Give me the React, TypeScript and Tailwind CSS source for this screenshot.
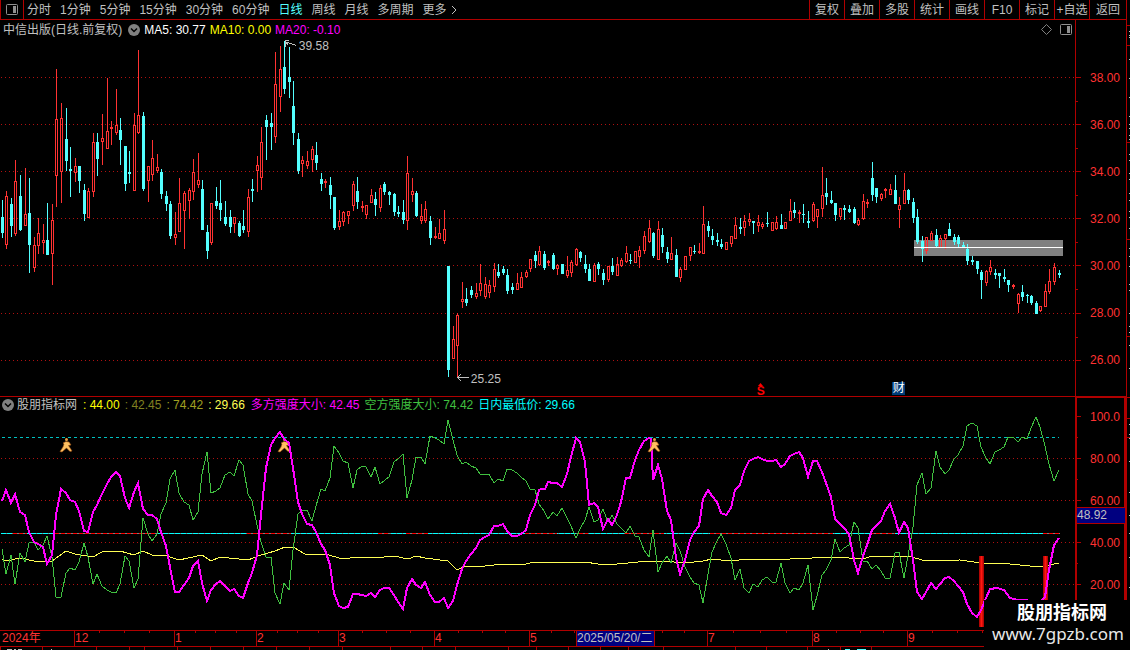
import React from 'react';

// x, high, body top, body bottom, low, direction (u = up, d = down)
const candleData = `
2 200 217 233 238 d;6 191 196 245 249 r;11 198 204 226 237 d;15 160 181 234 236 u;20 175 196 230 231 d;25 168 214 226 226 u;
29 178 213 245 273 d;34 237 245 268 272 u;38 218 233 246 254 u;43 224 240 243 254 u;47 203 240 255 255 d;52 204 220 254 285 u;
56 69 119 176 207 u;61 103 118 172 203 u;66 108 139 161 171 d;70 147 169 171 197 d;75 158 166 173 182 u;79 166 166 181 193 d;
84 184 190 214 221 d;88 188 191 218 218 u;93 133 142 192 197 u;97 133 142 159 176 d;102 114 138 142 165 u;107 78 131 149 149 u;
111 121 127 129 145 u;116 89 125 133 135 u;120 118 130 140 165 d;125 146 146 184 191 d;129 151 172 174 183 d;134 113 125 191 191 u;
138 50 115 133 134 u;143 112 116 189 191 d;148 166 166 181 202 u;152 140 158 175 181 u;157 154 167 171 173 u;161 169 172 194 199 d;
166 191 196 204 211 d;170 201 204 236 239 d;175 212 234 238 245 u;179 178 203 232 232 u;184 191 193 211 249 u;189 188 190 201 219 u;
193 159 172 192 200 u;198 153 180 185 188 u;202 180 189 230 230 d;207 225 232 251 259 d;211 203 203 243 245 u;216 187 201 206 209 d;
220 180 203 210 221 d;225 201 217 224 226 d;230 210 217 227 233 d;234 217 217 224 233 u;239 221 223 236 237 d;243 210 226 230 233 d;
248 189 197 232 237 u;252 179 189 191 202 d;257 156 165 171 192 u;261 127 142 178 190 u;266 115 120 127 160 d;271 113 123 127 150 d;
275 52 84 137 143 u;280 46 69 97 112 u;284 41 67 89 94 d;289 47 77 82 98 d;293 81 106 133 145 d;298 133 139 171 174 d;
302 156 160 164 177 u;307 151 161 166 169 u;312 146 149 160 172 u;316 142 155 163 170 d;321 173 179 184 191 d;325 179 181 183 188 u;
330 177 185 195 209 d;334 197 197 228 230 d;339 210 221 227 230 u;343 211 212 222 226 u;348 211 211 216 224 u;353 181 184 206 211 u;
357 177 191 202 209 d;362 201 206 208 212 u;366 205 205 215 219 u;371 189 195 203 203 u;375 192 199 205 216 d;380 185 188 208 212 u;
384 182 184 192 195 d;389 191 192 195 205 d;394 193 194 212 216 d;398 206 212 214 217 d;403 200 212 220 224 d;407 156 173 221 230 u;
412 178 191 195 202 u;416 191 193 216 217 d;421 204 216 221 224 u;425 201 209 221 223 u;430 216 221 238 245 d;435 227 236 238 239 u;
439 219 233 239 239 u;444 210 229 241 244 u;448 266 266 370 377 d;453 326 339 359 359 u;457 313 315 346 377 u;462 282 299 302 308 u;
466 288 299 303 306 d;471 286 290 295 298 d;476 283 293 297 299 u;480 264 283 291 296 u;485 277 284 297 299 u;489 280 285 293 298 u;
494 263 269 287 292 u;498 264 272 276 278 d;503 266 269 273 275 d;507 269 275 291 294 d;512 283 287 290 294 d;517 273 283 290 290 u;
521 272 277 288 288 u;526 270 272 277 278 u;530 259 259 269 272 u;535 251 255 261 268 d;539 246 251 265 266 u;544 251 254 268 270 d;
548 260 261 263 266 u;553 253 255 269 270 d;557 264 265 269 275 u;562 264 264 274 274 d;567 256 270 276 278 u;571 260 262 273 277 u;
576 248 249 265 266 u;580 251 252 258 262 d;585 255 264 269 273 d;589 264 269 281 281 d;594 263 265 282 282 u;598 262 264 269 275 d;
603 269 273 280 285 d;608 266 266 280 282 u;612 258 266 272 275 d;617 257 264 276 276 u;621 258 260 266 267 u;626 246 253 262 263 u;
630 254 260 261 264 d;635 251 251 263 263 u;639 246 250 257 268 u;644 231 236 251 254 u;649 220 228 242 243 u;653 232 233 256 258 d;
658 221 229 260 260 u;662 228 235 247 253 d;667 247 252 259 263 d;671 237 253 260 260 u;676 249 255 277 277 d;680 267 269 278 282 u;
685 256 256 270 270 u;690 247 247 256 261 u;694 245 251 252 254 d;699 243 251 253 254 u;703 206 224 254 254 u;708 221 226 231 237 d;
712 229 236 240 245 d;717 233 240 242 246 d;721 239 244 247 249 d;726 242 242 250 250 u;731 236 236 244 247 u;735 217 225 239 239 u;
740 218 227 229 234 d;744 215 221 228 236 u;749 213 219 222 226 u;753 221 221 223 234 d;758 215 222 226 232 u;762 222 224 227 229 u;
767 212 223 224 227 d;772 222 222 231 231 u;776 216 222 229 230 u;781 214 225 229 229 d;785 222 222 229 229 u;790 199 211 221 221 u;
794 202 210 213 218 d;799 210 212 214 223 u;803 204 214 215 223 d;808 211 221 223 228 d;813 202 204 221 222 u;817 209 209 217 228 u;
822 167 195 209 217 u;826 178 193 197 205 d;831 191 200 203 204 d;835 203 203 215 221 d;840 208 208 217 220 u;844 205 208 210 220 d;
849 205 209 212 213 d;854 207 209 223 224 d;858 218 220 225 226 u;863 194 201 219 220 u;867 199 202 204 208 u;872 162 178 195 201 d;
876 188 188 197 203 d;881 193 194 199 201 u;885 188 189 191 198 u;890 184 189 195 195 u;895 175 190 204 204 d;899 197 205 210 228 u;
904 173 190 204 204 u;908 189 190 200 204 d;913 198 202 218 223 d;917 209 217 242 244 d;922 236 241 249 262 d;926 237 237 251 254 u;
931 231 233 241 241 u;936 229 235 246 248 d;940 235 238 248 248 u;945 234 234 239 249 u;949 223 229 236 236 d;954 234 237 242 245 d;
958 235 237 244 247 d;963 242 245 248 248 d;967 244 249 261 265 d;972 256 260 262 265 d;977 261 261 269 274 d;981 270 272 280 299 d;
986 270 271 283 286 u;990 260 267 272 275 u;995 269 273 275 279 d;999 273 273 276 288 d;1004 269 277 279 282 d;1008 280 280 285 292 d;
1013 284 285 287 289 u;1018 293 294 304 313 u;1022 285 292 297 301 d;1027 294 295 296 303 d;1031 295 296 303 305 d;1036 301 303 314 314 d;
1040 306 306 311 312 u;1045 284 291 307 307 u;1049 269 281 292 294 u;1054 263 267 282 285 u;1059 270 273 275 278 d`;

const candles = candleData
  .trim()
  .split(';')
  .map((row) => {
    const [x, high, top, bottom, low, dir] = row.trim().split(' ');
    return { x: +x, high: +high, top: +top, bottom: +bottom, low: +low, down: dir === 'd' };
  });

const bullLine =
  '2,501 6,490 11,503 15,494 20,512 25,515 29,532 34,542 38,544 43,547 47,564 52,555 56,515 61,489 66,493 70,500 75,502 79,511 84,531 88,532 93,512 97,505 102,494 107,484 111,477 116,472 120,476 125,498 129,508 134,492 138,483 143,509 148,515 152,515 157,519 161,532 166,546 170,567 175,592 179,592 184,585 189,578 193,566 198,561 202,583 207,601 211,590 216,584 220,581 225,586 230,591 234,589 239,596 243,598 248,583 252,573 257,555 261,515 266,468 271,445 275,438 280,432 284,439 289,443 293,468 298,502 302,514 307,524 312,525 316,532 321,544 325,550 330,565 334,593 339,606 343,608 348,607 353,594 357,594 362,595 366,596 371,593 375,597 380,590 384,588 389,588 394,595 398,602 403,609 407,588 412,579 416,585 421,588 425,582 430,595 435,602 439,602 444,598 448,608 453,601 457,585 462,569 466,561 471,554 476,548 480,540 485,537 489,535 494,526 498,526 503,524 507,531 512,536 517,536 521,534 526,530 530,515 535,505 539,490 541,489 545,489 548,482 553,483 557,483 562,487 567,474 571,457 576,438 580,442 585,462 589,505 594,503 598,507 603,529 608,519 612,525 617,515 621,502 626,478 630,478 635,460 639,450 644,441 649,438 651,439 653,480 658,465 662,479 667,511 671,520 676,558 680,574 685,560 690,540 694,532 699,526 703,499 708,490 712,496 717,502 721,513 726,515 731,508 735,490 740,485 744,471 749,461 753,459 758,457 762,459 767,461 772,461 776,460 781,467 785,464 790,456 794,454 799,452 803,458 808,477 813,461 817,461 822,472 826,483 831,497 835,519 840,524 844,528 849,534 854,560 858,573 863,556 867,545 872,530 876,526 881,521 885,511 890,504 895,518 899,533 904,522 908,528 913,560 917,592 922,599 926,592 931,583 936,589 940,584 945,578 949,577 954,581 958,586 963,592 967,604 972,613 977,617 981,610 986,598 990,589 997,588 1004,590 1010,598 1018,600 1027,600 1036,606 1045,597 1049,570 1054,545 1059,538';

const bearLine =
  '2,549 6,574 11,555 15,584 20,553 25,562 29,543 34,542 38,550 43,545 47,536 52,557 56,597 61,597 66,573 70,568 75,570 79,562 84,543 88,557 93,584 97,574 102,586 107,590 111,592 116,593 120,584 125,556 129,561 134,588 138,579 143,518 148,534 152,541 157,534 161,514 166,503 170,479 175,470 179,493 184,502 189,505 193,520 198,512 202,474 207,452 211,493 216,491 220,488 225,475 230,472 234,476 239,460 243,465 248,494 252,501 257,525 261,542 266,557 271,557 275,593 280,604 284,583 289,590 293,550 298,514 302,511 307,510 312,521 316,506 321,489 325,491 330,478 334,446 339,453 343,461 348,463 353,488 357,470 362,466 366,467 371,477 375,467 380,484 385,480 389,477 394,462 398,459 403,454 407,498 412,480 416,457 421,457 425,464 430,436 435,438 439,440 444,444 448,420 453,440 457,455 462,464 466,462 471,466 476,468 480,474 489,474 494,483 498,479 503,481 507,469 512,470 517,473 521,477 526,481 530,489 535,490 539,504 544,511 548,519 553,512 557,516 562,508 567,518 571,526 576,538 580,529 585,520 589,507 594,522 598,520 603,509 608,522 612,515 617,524 621,528 626,533 630,526 635,536 639,537 644,550 649,557 653,530 658,572 662,563 667,556 671,563 676,543 680,551 685,567 690,577 694,583 699,585 703,603 708,574 712,552 717,541 721,534 726,544 731,558 735,580 740,569 744,588 749,593 753,584 758,587 762,580 767,577 772,582 776,582 781,563 785,583 790,593 794,588 799,590 803,583 808,565 813,610 817,596 822,575 826,570 831,560 835,539 840,552 844,548 849,545 854,522 858,528 863,561 867,561 872,569 876,565 881,571 885,578 890,578 895,553 899,552 904,578 908,556 913,527 917,485 922,473 926,494 931,488 936,451 940,467 945,474 949,470 954,459 958,455 963,446 967,426 972,423 977,426 981,447 986,458 990,464 995,452 999,450 1004,447 1008,437 1013,437 1018,442 1022,437 1027,439 1031,428 1036,417 1040,427 1045,446 1049,464 1054,481 1059,470';

const lowLine =
  '2,559 6,561 20,558 34,561 52,561 66,551 75,554 93,557 102,552 120,551 134,555 143,551 152,555 164,555 179,560 202,555 211,561 220,557 248,560 261,555 275,551 285,547 293,547 305,554 325,554 343,559 358,557 375,558 394,556 408,559 416,556 425,558 448,561 457,570 466,566 485,566 503,564 521,565 535,562 553,562 585,562 598,564 617,564 649,561 662,561 685,563 703,561 712,559 730,561 749,559 790,559 835,557 863,559 872,556 908,556 926,561 960,560 981,563 1000,563 1040,567 1059,563';

// stretches of the 44.00 line that are red, the rest is cyan
const redSpans = [[13, 27], [55, 158], [247, 291], [378, 390], [406, 428], [525, 557], [579, 588], [625, 664], [710, 833], [870, 895], [1043, 1060]];

const periods = ['分时', '1分钟', '5分钟', '15分钟', '30分钟', '60分钟', '日线', '周线', '月线', '多周期'];
const tools = ['复权', '叠加', '多股', '统计', '画线', 'F10', '标记', '+自选', '返回'];

const priceLevels = [77, 124, 171, 218, 265, 313, 360];
const priceHalf = [101, 148, 195, 242, 289, 337];
const levels = [458, 500, 542, 584];
const levelHalf = [437, 479, 521, 563];

const months = [
  { label: '2024年', size: 74 },
  { label: '12', size: 100 },
  { label: '1', size: 82 },
  { label: '2', size: 82 },
  { label: '3', size: 96 },
  { label: '4', size: 95 },
  { label: '5', size: 47 },
  { label: '2025/05/20/二', size: 78, current: true },
  { label: '', size: 53 },
  { label: '7', size: 105 },
  { label: '8', size: 95 },
  { label: '9', size: 219 },
];
const weekTicks = [99, 124, 149, 195, 215, 236, 277, 297, 318, 362, 386, 410, 458, 482, 505, 551, 574, 662, 684, 733, 760, 786, 836, 860, 883, 932, 957, 982];
const bottomTicks = [0, 42, 96, 129, 144, 177, 210, 243, 276, 309, 342, 390, 422, 455, 508, 536, 568, 600, 628, 663, 735, 766, 807, 840, 871];
const sideMarks = [31, 35, 37, 59, 78, 97, 116, 124, 128, 135, 139, 154, 160, 173, 179, 193, 200, 211, 217, 228, 248, 256, 266, 284, 290, 313, 326, 332, 345, 368, 424, 434, 438, 461, 492, 515, 533, 557, 587];

const Candle = ({ c }) => {
  const color = c.down ? '#54ffff' : '#ff3232';
  const height = Math.max(c.bottom - c.top, 1);
  return (
    <g>
      {c.top > c.high && <rect x={c.x} y={c.high} width="1" height={c.top - c.high} fill={color} />}
      {c.low > c.bottom && <rect x={c.x} y={c.bottom} width="1" height={c.low - c.bottom} fill={color} />}
      {c.down || height < 3 ? (
        <rect x={c.x - 1} y={c.top} width="3" height={height} fill={color} />
      ) : (
        <rect x={c.x - 0.5} y={c.top + 0.5} width="2" height={height - 1} fill="none" stroke={color} />
      )}
    </g>
  );
};

const ToggleIcon = () => (
  <svg width="12" height="12" viewBox="0 0 12 12" className="shrink-0">
    <circle cx="6" cy="6" r="6" fill="#808080" />
    <path d="M3 4.5 L6 7.5 L9 4.5" fill="none" stroke="#000" strokeWidth="1.5" />
  </svg>
);

const PanelIcon = () => (
  <svg width="12" height="12" viewBox="0 0 12 12">
    <rect x="0.5" y="0.5" width="11" height="10" rx="1" fill="none" stroke="#909090" />
    <rect x="7" y="2" width="3" height="7" fill="#909090" />
  </svg>
);

const Runner = ({ x }) => (
  <g transform={`translate(${x} 438)`} shapeRendering="auto">
    <circle cx="0.5" cy="1.5" r="1.5" fill="#e8a040" />
    <path d="M-3 5 L0 3.5 L3 4 L5 7 L2.5 7.5 L6 13 L4 13.5 L0.5 10 L-4 14 L-6 13.5 L-3 9 L-2 6 Z" fill="#ffc060" stroke="#a05010" strokeWidth="0.6" />
  </g>
);

const Toolbar = () => (
  <div className="flex h-5 shrink-0 items-stretch border-b border-[#b00000] text-[#c0c0c0]">
    <button aria-label="侧栏" className="flex w-6 items-center justify-center border-x border-[#b00000]">
      <PanelIcon />
    </button>
    <nav className="flex items-center gap-[9px] pl-[3px] whitespace-nowrap">
      {periods.map((p) => (
        <button key={p} className={p === '日线' ? 'text-[#54ffff]' : ''}>
          {p}
        </button>
      ))}
      <button className="flex items-center gap-1">
        更多
        <svg width="6" height="10" viewBox="0 0 6 10">
          <path d="M1 1 L5 5 L1 9" fill="none" stroke="#c0c0c0" />
        </svg>
      </button>
    </nav>
    <div className="ml-auto flex whitespace-nowrap">
      {tools.map((t) => (
        <button key={t} className="w-[35px] border-l border-[#b00000] text-center last:w-[37px]">
          {t}
        </button>
      ))}
    </div>
  </div>
);

const PriceChart = () => (
  <div className="relative flex min-w-0 flex-1 flex-col">
    <div className="flex h-[19px] shrink-0 items-center whitespace-nowrap pl-[3px]">
      <span className="text-[#c0c0c0]">中信出版(日线.前复权)</span>
      <span className="flex pl-1.5">
        <ToggleIcon />
      </span>
      <span className="pl-1 text-white">MA5: 30.77</span>
      <span className="pl-1 text-[#ffff00]">MA10: 0.00</span>
      <span className="pl-1 text-[#ff00ff]">MA20: -0.10</span>
      <span className="ml-auto flex items-center gap-2 pr-[3px]">
        <svg width="11" height="11" viewBox="0 0 11 11">
          <path d="M5.5 0.5 L10.5 5.5 L5.5 10.5 L0.5 5.5 Z" fill="none" stroke="#808080" />
        </svg>
        <PanelIcon />
      </span>
    </div>
    <svg viewBox="0 39 1075 357" preserveAspectRatio="none" className="min-h-0 w-full flex-1" shapeRendering="crispEdges">
      {priceLevels.map((y) => (
        <path key={y} d={`M1 ${y + 0.5} H1075`} stroke="#b01010" strokeDasharray="1 3" />
      ))}
      <rect x="914" y="240" width="149" height="16" fill="#808080" />
      {candles.map((c) => (
        <Candle key={c.x} c={c} />
      ))}
      <rect x="914" y="247" width="149" height="1" fill="#fff" />
      <path d="M285.5 47 V41.5 M285 41.5 L296 45.5 M285 40.5 H289 M285 41 L288 45" fill="none" stroke="#c0c0c0" />
      <path d="M457 377.5 H469 M461 374 L457.5 377.5 L461 381" fill="none" stroke="#c0c0c0" />
    </svg>
    <span className="absolute top-[4.8%] left-[27.8%] text-[#c0c0c0]">39.58</span>
    <span className="absolute top-[93.3%] left-[43.8%] text-[#c0c0c0]">25.25</span>
    <span className="absolute bottom-0 left-[70.4%] flex flex-col items-center">
      <svg width="5" height="3" viewBox="0 0 5 3">
        <path d="M2.5 0 L5 3 H0 Z" fill="#ff0000" />
      </svg>
      <b className="leading-[10px] text-[#ff0000]">S</b>
    </span>
    <span className="absolute bottom-px left-[83%] h-[13px] w-[13px] bg-[#003c78] text-center leading-[13px] text-white">财</span>
  </div>
);

const PriceAxis = () => (
  <div className="relative w-[51px] shrink-0">
    <svg viewBox="0 20 51 376" preserveAspectRatio="none" className="absolute inset-0 h-full w-full" shapeRendering="crispEdges">
      <rect x="0" y="20" width="1" height="376" fill="#b00000" />
      {priceLevels.map((y) => (
        <rect key={y} x="0" y={y} width="6" height="1" fill="#b00000" />
      ))}
      {priceHalf.map((y) => (
        <rect key={y} x="0" y={y} width="3" height="1" fill="#b00000" />
      ))}
    </svg>
    <div className="flex h-full flex-col justify-between pt-[50px] pb-7 pl-[15px] leading-4 text-[#ff3232]">
      {['38.00', '36.00', '34.00', '32.00', '30.00', '28.00', '26.00'].map((v) => (
        <span key={v}>{v}</span>
      ))}
    </div>
  </div>
);

const StrengthChart = () => (
  <div className="flex min-w-0 flex-1 flex-col border-t border-[#b00000]">
    <div className="flex h-4 shrink-0 items-center whitespace-nowrap pl-0.5">
      <ToggleIcon />
      <span className="pl-[3px] text-[#c0c0c0]">股朋指标网</span>
      <span className="pl-1.5 text-[#ffff00]">: 44.00</span>
      <span className="pl-[5px] text-[#808020]">: 42.45</span>
      <span className="pl-[5px] text-[#a0a020]">: 74.42</span>
      <span className="pl-[5px] text-[#ffff54]">: 29.66</span>
      <span className="pl-1.5 text-[#ff00ff]">多方强度大小: 42.45</span>
      <span className="pl-[5px] text-[#40c040]">空方强度大小: 74.42</span>
      <span className="pl-[5px] text-[#00ffff]">日内最低价: 29.66</span>
    </div>
    <svg viewBox="0 413 1075 217" preserveAspectRatio="none" className="min-h-0 w-full flex-1" shapeRendering="crispEdges">
      <defs>
        <linearGradient id="bar">
          <stop offset="0" stopColor="#a00000" />
          <stop offset="0.5" stopColor="#ff1810" />
          <stop offset="1" stopColor="#a00000" />
        </linearGradient>
      </defs>
      {levels.map((y) => (
        <path key={y} d={`M1 ${y + 0.5} H1075`} stroke="#b01010" strokeDasharray="1 3" />
      ))}
      <path d="M2 437.5 H1059" stroke="#00c0c0" strokeDasharray="3 3" />
      <path d="M1 533.5 H1060" stroke="#808080" />
      <path d="M1 533.5 H1060" stroke="#00ffff" strokeDasharray="5 1" />
      {redSpans.map(([from, to]) => (
        <g key={from}>
          <path d={`M${from} 533.5 H${to}`} stroke="#808080" />
          <path d={`M${from} 533.5 H${to}`} stroke="#ff0000" strokeDasharray="4 2" />
        </g>
      ))}
      <polyline points={lowLine} fill="none" stroke="#ffff54" />
      <polyline points={bearLine} fill="none" stroke="#40c040" />
      <rect x="979" y="556" width="5" height="71" fill="url(#bar)" />
      <rect x="1043" y="556" width="5" height="71" fill="url(#bar)" />
      <Runner x={66} />
      <Runner x={284} />
      <polyline points={bullLine} fill="none" stroke="#ff00ff" strokeWidth="2" />
      <Runner x={654} />
    </svg>
  </div>
);

const StrengthAxis = () => (
  <div className="relative w-[51px] shrink-0">
    <svg viewBox="0 396 51 234" preserveAspectRatio="none" className="absolute inset-0 h-full w-full" shapeRendering="crispEdges">
      <path d="M1 630 V397 H50 V630" fill="none" stroke="#b00000" strokeWidth="2" />
      {[416, ...levels].map((y) => (
        <rect key={y} x="0" y={y} width="6" height="1" fill="#b00000" />
      ))}
      {levelHalf.map((y) => (
        <rect key={y} x="0" y={y} width="3" height="1" fill="#b00000" />
      ))}
    </svg>
    <div className="flex h-full flex-col justify-between pt-[13px] pb-[37px] pl-[15px] leading-4 text-[#ff3232]">
      {['100.0', '80.00', '60.00', '40.00', '20.00'].map((v) => (
        <span key={v}>{v}</span>
      ))}
    </div>
    <span className="absolute top-[47.5%] right-px left-0.5 border-y border-[#b00000] bg-[#000080] leading-[15px] text-[#c0c0c0]">48.92</span>
  </div>
);

const DateAxis = () => (
  <div className="relative flex h-[17px] shrink-0 border-y border-[#b00000] leading-[15px] text-[#ff3232]">
    <svg viewBox="0 0 1126 15" preserveAspectRatio="none" className="absolute inset-0 h-full w-full" shapeRendering="crispEdges">
      {weekTicks.map((x) => (
        <rect key={x} x={x} y="0" width="1" height="2" fill="#b00000" />
      ))}
    </svg>
    {/* the border or padding is taken off the share of each month */}
    {months.map((m, i) => (
      <span
        key={i}
        className={`relative min-w-0 basis-0 whitespace-nowrap ${i > 0 ? 'border-l border-[#b00000]' : 'pl-0.5'} ${m.current ? 'bg-[#000080] text-[#c0c0c0]' : ''}`}
        style={{ flexGrow: i > 0 ? m.size - 1 : m.size - 2 }}
      >
        {m.label}
      </span>
    ))}
  </div>
);

const App = () => {
  return (
    <div className="relative flex h-screen w-full overflow-hidden bg-black font-['Liberation_Sans','Noto_Sans_CJK_SC',sans-serif] text-[12px] leading-4">
      <div className="flex min-w-0 flex-1 flex-col border-r border-[#b00000]">
        <Toolbar />
        <div className="flex min-h-0 flex-[376_1_0px]">
          <PriceChart />
          <PriceAxis />
        </div>
        <div className="flex min-h-0 flex-[234_1_0px]">
          <StrengthChart />
          <StrengthAxis />
        </div>
        <DateAxis />
        <svg viewBox="0 0 1126 3" preserveAspectRatio="none" className="h-[3px] w-full shrink-0" shapeRendering="crispEdges">
          {bottomTicks.map((x) => (
            <rect key={x} x={x} y="0" width="1" height="3" fill="#b00000" />
          ))}
          <path d="M7 2.5 H12 M14 2.5 H16 M18 2.5 H22 M51 2.5 H52 M828 2.5 H829" stroke="#c0c0c0" />
          <path d="M845 2.5 H850 M857 2.5 H866" stroke="#54ffff" />
        </svg>
      </div>
      <svg viewBox="0 0 3 650" preserveAspectRatio="none" className="h-full w-[3px] shrink-0" shapeRendering="crispEdges">
        {[25, 45, 142, 239, 336, 397, 418, 437].map((y) => (
          <rect key={y} x="0" y={y} width="3" height="1" fill="#b00000" />
        ))}
        {sideMarks.map((y) => (
          <rect key={y} x="2" y={y} width="1" height="1" fill="#c0c0c0" />
        ))}
      </svg>
      <div className="absolute right-0 bottom-0 flex h-[50px] w-[146px] flex-col items-center gap-0.5 bg-black pt-[3px] pl-2.5 text-white">
        <span className="text-[18px] leading-5 font-bold">股朋指标网</span>
        <a href="#" className="-ml-2 font-['Noto_Sans',sans-serif] text-[17px] leading-[18px] text-[#e8e8e8]">
          www.7gpzb.com
        </a>
      </div>
    </div>
  );
};

export default App;
